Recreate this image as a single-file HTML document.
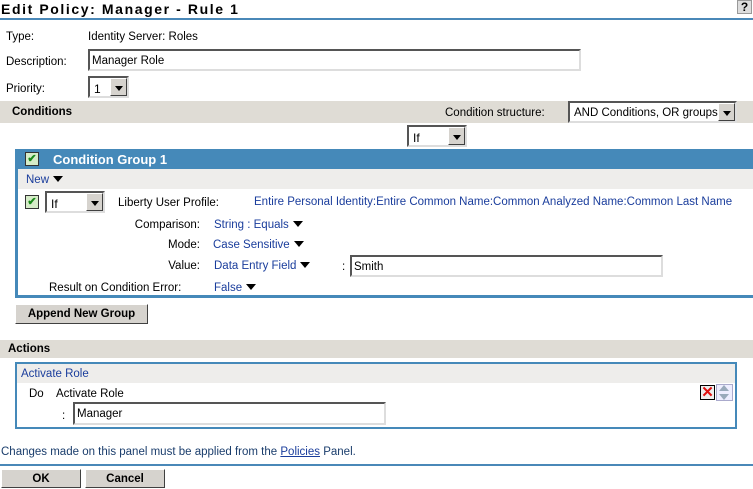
<!DOCTYPE html>
<html><head><style>
*{margin:0;padding:0;box-sizing:border-box}
body{width:753px;height:489px;background:#fff;font-family:"Liberation Sans",sans-serif;font-size:11.5px;color:#000;position:relative;overflow:hidden}
.a{position:absolute;white-space:nowrap}
.t{margin-top:2px}
.lnk{color:#1a3d9c}
.inp{position:absolute;background:#fff;border:2px solid;border-color:#555 #ddd #ddd #555;padding:4px 2px 0;font-size:11.5px}
.sel{position:absolute;background:#fff;border:2px solid;border-color:#555 #ddd #ddd #555;font-size:12px;padding:4px 4px 0}
.sel b{position:absolute;right:0;top:0;bottom:0;width:17px;background:#d6d3ce;border:1px solid;border-color:#fff #404040 #404040 #fff}
.sel b:after{content:"";position:absolute;left:4px;top:7px;border:4px solid transparent;border-top:5px solid #000;border-bottom:0}
.tri{display:inline-block;width:0;height:0;border:5px solid transparent;border-top:6px solid #000;border-bottom:0;margin-left:4px;vertical-align:1px}
.bar{position:absolute;left:0;width:753px;background:#dfdcd5;font-weight:bold}
.btn{position:absolute;background:#d6d3ce;border:1px solid;border-color:#fff #404040 #404040 #fff;font-weight:bold;text-align:center;font-size:11.5px}
.chk{position:absolute;width:14px;height:14px;border:1px solid #333;background:#d6ecc8;color:#1a8a1a;font-size:11px;line-height:12px;text-align:center;font-weight:bold}
</style></head><body>
<div class="a" style="left:1px;top:1px;font-size:14px;font-weight:bold;letter-spacing:1.6px">Edit Policy: Manager - Rule 1</div>
<div class="a" style="left:737px;top:0;width:15px;height:14px;background:#ddd;border:1px solid #999;font-weight:bold;font-size:12px;text-align:center;line-height:12px">?</div>
<div class="a" style="left:0;top:18px;width:753px;height:2px;background:#4a88b8"></div>
<div class="a" style="left:6px;top:31px">Type:</div>
<div class="a" style="left:88px;top:31px">Identity Server: Roles</div>
<div class="a" style="left:6px;top:56px">Description:</div>
<div class="inp" style="left:88px;top:49px;width:493px;height:22px">Manager Role</div>
<div class="a" style="left:6px;top:83px">Priority:</div>
<div class="sel" style="left:88px;top:76px;width:41px;height:22px">1<b></b></div>
<div class="bar" style="top:101px;height:22px"><span class="a" style="left:12px;top:5px">Conditions</span></div>
<div class="a" style="left:445px;top:107px">Condition structure:</div>
<div class="sel" style="left:568px;top:101px;width:169px;height:22px;font-size:11.5px">AND Conditions, OR groups<b></b></div>
<div class="sel" style="left:407px;top:125px;width:60px;height:22px">If<b></b></div>
<div class="a" style="left:15px;top:149px;width:738px;height:149px;border:3px solid #4589b9;border-right:none"></div>
<div class="a" style="left:15px;top:149px;width:738px;height:20px;background:#4589b9"></div>
<div class="chk" style="left:25px;top:152px">✔</div>
<div class="a" style="left:53px;top:152px;color:#fff;font-weight:bold;font-size:13px">Condition Group 1</div>
<div class="a" style="left:18px;top:169px;width:735px;height:20px;background:#eeedeb"></div>
<div class="a lnk" style="left:26px;top:174px">New<span class="tri"></span></div>
<div class="chk" style="left:25px;top:195px">✔</div>
<div class="sel" style="left:45px;top:191px;width:60px;height:22px">If<b></b></div>
<div class="a" style="left:118px;top:197px">Liberty User Profile:</div>
<div class="a lnk" style="left:254px;top:196px">Entire Personal Identity:Entire Common Name:Common Analyzed Name:Common Last Name</div>
<div class="a" style="left:100px;top:219px;width:100px;text-align:right">Comparison:</div>
<div class="a lnk" style="left:214px;top:219px">String : Equals<span class="tri"></span></div>
<div class="a" style="left:100px;top:239px;width:100px;text-align:right">Mode:</div>
<div class="a lnk" style="left:213px;top:239px">Case Sensitive<span class="tri"></span></div>
<div class="a" style="left:100px;top:260px;width:100px;text-align:right">Value:</div>
<div class="a lnk" style="left:214px;top:260px">Data Entry Field<span class="tri"></span></div>
<div class="a" style="left:342px;top:261px">:</div>
<div class="inp" style="left:350px;top:255px;width:313px;height:22px">Smith</div>
<div class="a" style="left:49px;top:282px">Result on Condition Error:</div>
<div class="a lnk" style="left:214px;top:282px">False<span class="tri"></span></div>
<div class="btn" style="left:15px;top:304px;width:133px;height:20px;line-height:18px">Append New Group</div>
<div class="bar" style="top:340px;height:18px"><span class="a" style="left:8px;top:3px">Actions</span></div>
<div class="a" style="left:15px;top:362px;width:722px;height:67px;border:2px solid #4589b9"></div>
<div class="a" style="left:17px;top:364px;width:718px;height:19px;background:#eeedeb"></div>
<div class="a lnk" style="left:21px;top:368px">Activate Role</div>
<div class="a" style="left:29px;top:388px">Do</div>
<div class="a" style="left:56px;top:388px">Activate Role</div>
<div class="a" style="left:62px;top:410px">:</div>
<div class="inp" style="left:73px;top:402px;width:313px;height:23px">Manager</div>
<div class="a" style="left:700px;top:385px;width:15px;height:15px;border:1px solid #000;background:#eee;color:#e01010;font-weight:bold;font-size:15px;line-height:13px;text-align:center">✕</div>
<div class="a" style="left:716px;top:384px;width:17px;height:17px;border:1px solid #aac;background:#eef"></div>
<div class="a" style="left:719px;top:385px;border:5px solid transparent;border-bottom:6px solid #9ab;border-top:0"></div>
<div class="a" style="left:719px;top:394px;border:5px solid transparent;border-top:6px solid #9ab;border-bottom:0"></div>
<div class="a" style="left:1px;top:446px;color:#1a3d6c">Changes made on this panel must be applied from the <span style="color:#1a3d9c;text-decoration:underline">Policies</span> Panel.</div>
<div class="a" style="left:0;top:464px;width:753px;height:2px;background:#4a88b8"></div>
<div class="btn" style="left:1px;top:469px;width:80px;height:19px;line-height:18px">OK</div>
<div class="btn" style="left:85px;top:469px;width:80px;height:19px;line-height:18px">Cancel</div>
</body></html>
